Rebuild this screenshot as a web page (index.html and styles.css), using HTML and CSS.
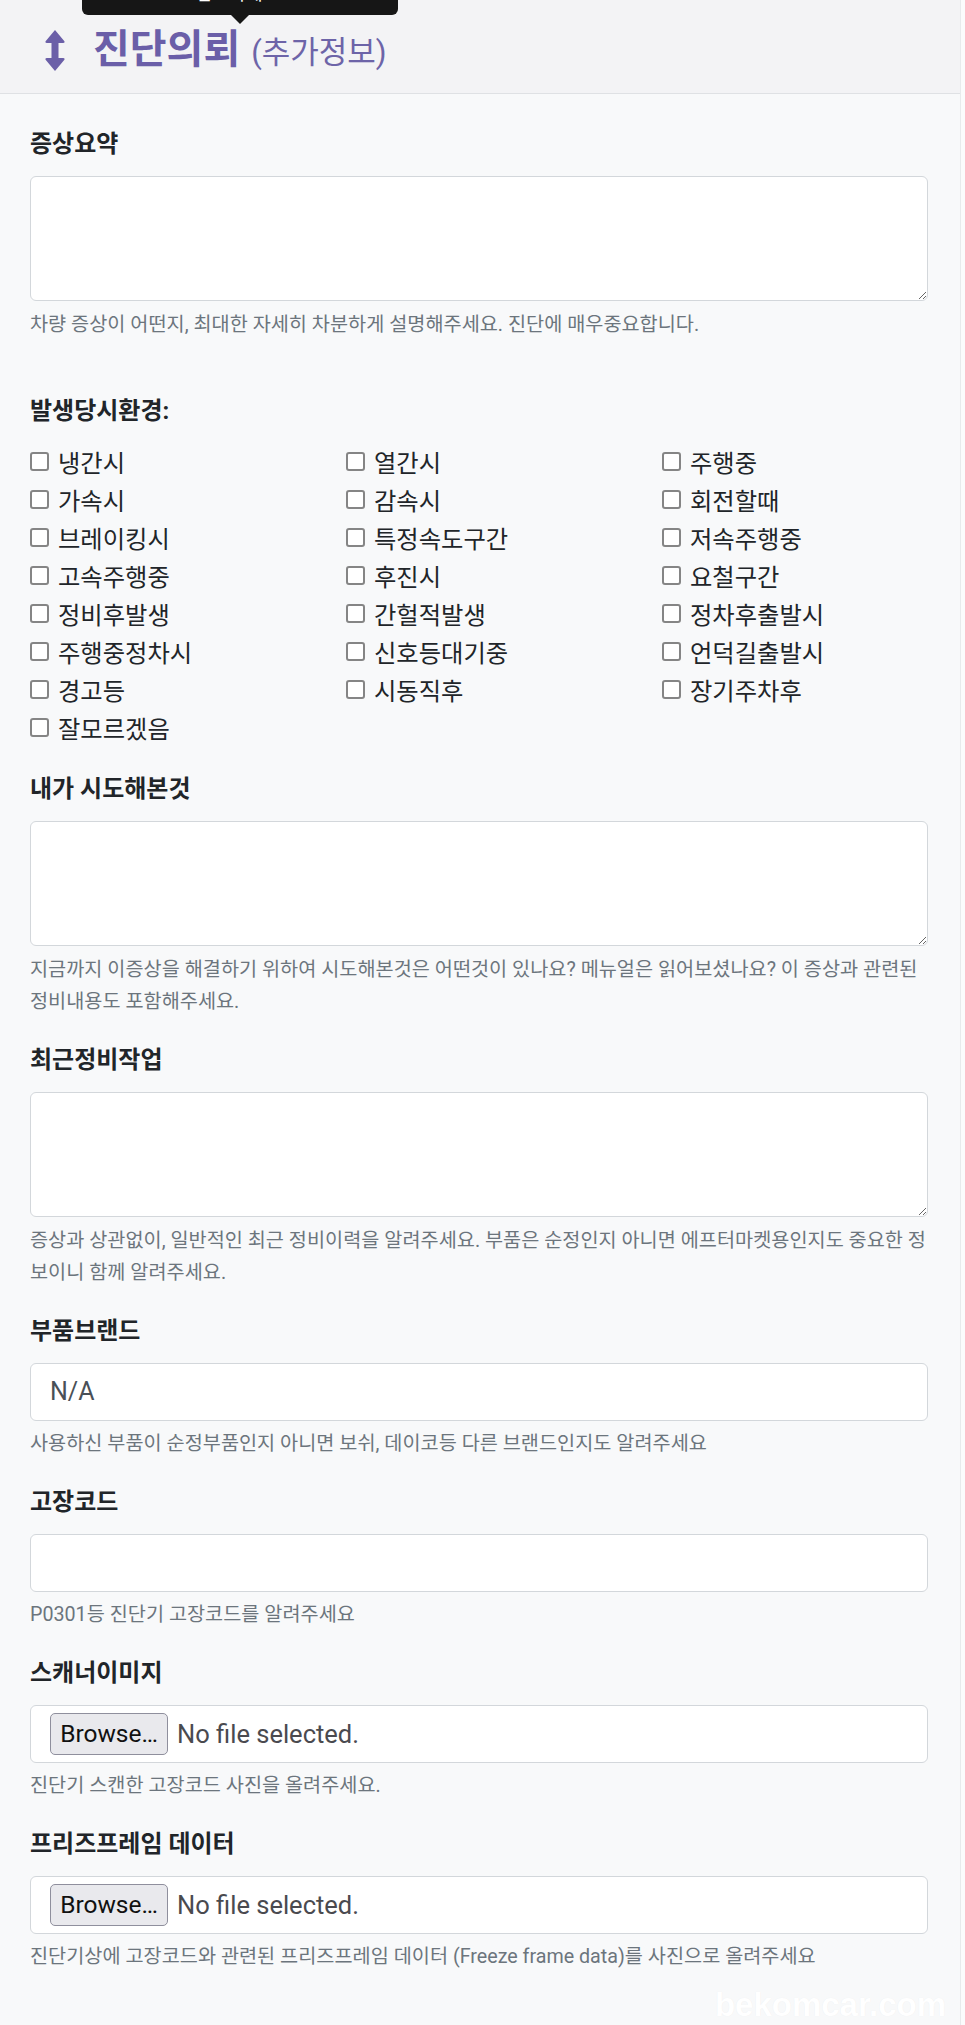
FILE: index.html
```html
<!DOCTYPE html>
<html lang="ko">
<head>
<meta charset="utf-8">
<title>진단의뢰</title>
<link rel="stylesheet" href="styles.css">
</head>
<body>
<div class="page">
  <div class="tooltip">참고하세요.</div>
  <div class="header">
    <svg class="hicon" width="20" height="41" viewBox="0 0 20 41"><path d="M10 0 L19.2 11 Q20.4 13 18 13 H13.5 V28 H18 Q20.4 28 19.2 30 L10 41 L0.8 30 Q-0.4 28 2 28 H6.5 V13 H2 Q-0.4 13 0.8 11 Z" fill="#6b5fa8"/></svg>
    <h1 class="title">진단의뢰 <small class="sub">(추가정보)</small></h1>
  </div>

  <form class="form">
    <div class="group">
      <label class="lbl">증상요약</label>
      <textarea class="ta"></textarea>
      <div class="help help-ta">차량 증상이 어떤지, 최대한 자세히 차분하게 설명해주세요. 진단에 매우중요합니다.</div>
    </div>

    <div class="group group-env">
      <label class="lbl">발생당시환경:</label>
      <div class="checks">
        <label class="chk"><input type="checkbox"><span>냉간시</span></label>
        <label class="chk"><input type="checkbox"><span>열간시</span></label>
        <label class="chk"><input type="checkbox"><span>주행중</span></label>
        <label class="chk"><input type="checkbox"><span>가속시</span></label>
        <label class="chk"><input type="checkbox"><span>감속시</span></label>
        <label class="chk"><input type="checkbox"><span>회전할때</span></label>
        <label class="chk"><input type="checkbox"><span>브레이킹시</span></label>
        <label class="chk"><input type="checkbox"><span>특정속도구간</span></label>
        <label class="chk"><input type="checkbox"><span>저속주행중</span></label>
        <label class="chk"><input type="checkbox"><span>고속주행중</span></label>
        <label class="chk"><input type="checkbox"><span>후진시</span></label>
        <label class="chk"><input type="checkbox"><span>요철구간</span></label>
        <label class="chk"><input type="checkbox"><span>정비후발생</span></label>
        <label class="chk"><input type="checkbox"><span>간헐적발생</span></label>
        <label class="chk"><input type="checkbox"><span>정차후출발시</span></label>
        <label class="chk"><input type="checkbox"><span>주행중정차시</span></label>
        <label class="chk"><input type="checkbox"><span>신호등대기중</span></label>
        <label class="chk"><input type="checkbox"><span>언덕길출발시</span></label>
        <label class="chk"><input type="checkbox"><span>경고등</span></label>
        <label class="chk"><input type="checkbox"><span>시동직후</span></label>
        <label class="chk"><input type="checkbox"><span>장기주차후</span></label>
        <label class="chk"><input type="checkbox"><span>잘모르겠음</span></label>
      </div>
    </div>

    <div class="group">
      <label class="lbl">내가 시도해본것</label>
      <textarea class="ta"></textarea>
      <div class="help help-ta">지금까지 이증상을 해결하기 위하여 시도해본것은 어떤것이 있나요? 메뉴얼은 읽어보셨나요? 이 증상과 관련된 정비내용도 포함해주세요.</div>
    </div>

    <div class="group">
      <label class="lbl">최근정비작업</label>
      <textarea class="ta"></textarea>
      <div class="help help-ta">증상과 상관없이, 일반적인 최근 정비이력을 알려주세요. 부품은 순정인지 아니면 에프터마켓용인지도 중요한 정보이니 함께 알려주세요.</div>
    </div>

    <div class="group">
      <label class="lbl">부품브랜드</label>
      <input class="inp" type="text" value="N/A">
      <div class="help">사용하신 부품이 순정부품인지 아니면 보쉬, 데이코등 다른 브랜드인지도 알려주세요</div>
    </div>

    <div class="group">
      <label class="lbl">고장코드</label>
      <input class="inp" type="text">
      <div class="help">P0301등 진단기 고장코드를 알려주세요</div>
    </div>

    <div class="group">
      <label class="lbl">스캐너이미지</label>
      <div class="file"><span class="browse">Browse…</span><span class="nofile">No file selected.</span></div>
      <div class="help">진단기 스캔한 고장코드 사진을 올려주세요.</div>
    </div>

    <div class="group">
      <label class="lbl">프리즈프레임 데이터</label>
      <div class="file"><span class="browse">Browse…</span><span class="nofile">No file selected.</span></div>
      <div class="help">진단기상에 고장코드와 관련된 프리즈프레임 데이터 (Freeze frame data)를 사진으로 올려주세요</div>
    </div>
  </form>

  <div class="watermark">bekomcar.com</div>
</div>
</body>
</html>
```

FILE: styles.css
```css
html, body {
  margin: 0;
  padding: 0;
}
body {
  background: #fbfbfc;
  font-family: Roboto, "Noto Sans CJK KR", "Noto Sans", sans-serif;
  color: #212529;
}
.page {
  position: relative;
  width: 960px;
  min-height: 2025px;
  background: #f8f9fa;
  border-right: 1px solid #e8eaec;
  overflow: hidden;
}
.tooltip {
  position: absolute;
  left: 82px;
  top: -30px;
  width: 316px;
  height: 45px;
  background: #161616;
  border-radius: 6px;
  color: #fff;
  font-size: 18px;
  line-height: 24px;
  text-align: center;
  padding-top: 12px;
  box-sizing: border-box;
  z-index: 5;
}
.tooltip::after {
  content: "";
  position: absolute;
  left: 149px;
  bottom: -9px;
  border-left: 9px solid transparent;
  border-right: 9px solid transparent;
  border-top: 9px solid #161616;
}
.header {
  height: 94px;
  box-sizing: border-box;
  background: #f3f3f5;
  border-bottom: 1px solid #dfe1e4;
  display: flex;
  align-items: center;
  padding: 9px 0 0 45px;
}
.hicon {
  flex: none;
  margin-top: -1px;
}
.title {
  margin: 0 0 0 28px;
  font-size: 40px;
  font-weight: 700;
  color: #6a5ea8;
  line-height: 50px;
  white-space: nowrap;
}
.sub {
  font-size: 31px;
  font-weight: 400;
  color: #6d64a8;
  margin-left: 1px;
}
.form {
  padding: 33.5px 32px 0 30px;
}
.group {
  margin-bottom: 26px;
}
.group-env {
  margin-top: 54px;
}
.lbl {
  display: block;
  font-size: 24px;
  font-weight: 700;
  line-height: 33px;
  margin-bottom: 15px;
  color: #212529;
}
.ta {
  display: block;
  width: 100%;
  height: 125px;
  box-sizing: border-box;
  margin: 0;
  border: 1px solid #d3d7db;
  border-radius: 6px;
  background: #fff;
  font-family: inherit;
  font-size: 22px;
}
.inp {
  display: block;
  width: 100%;
  height: 58px;
  box-sizing: border-box;
  margin: 0;
  padding: 0 19px;
  border: 1px solid #d3d7db;
  border-radius: 6px;
  background: #fff;
  font-family: inherit;
  font-size: 25px;
  color: #495057;
}
.help {
  font-size: 19.7px;
  line-height: 32px;
  color: #6c757d;
  margin-top: 7px;
}
.help-ta {
  margin-top: 8px;
}
.checks {
  display: grid;
  grid-template-columns: 316px 316px 1fr;
}
.chk {
  display: flex;
  align-items: center;
  height: 38px;
  font-size: 24.3px;
  color: #212529;
}
.chk input {
  appearance: none;
  -webkit-appearance: none;
  width: 19px;
  height: 19px;
  margin: 0 9px 0 0;
  border: 2px solid #858585;
  border-radius: 3px;
  background: #fff;
  box-sizing: border-box;
  flex: none;
}
.file {
  display: flex;
  align-items: center;
  height: 58px;
  box-sizing: border-box;
  border: 1px solid #d3d7db;
  border-radius: 6px;
  background: #fff;
  padding-left: 19px;
}
.browse {
  display: inline-flex;
  align-items: center;
  justify-content: center;
  width: 118px;
  height: 42px;
  box-sizing: border-box;
  background: #e9e9ed;
  border: 1px solid #8f8f9d;
  border-radius: 5px;
  font-size: 24.5px;
  color: #111;
  white-space: nowrap;
}
.nofile {
  margin-left: 9px;
  font-size: 25.5px;
  color: #4a4a4f;
}
.watermark {
  position: absolute;
  right: 14px;
  top: 1986px;
  font-family: "Liberation Sans", Arial, sans-serif;
  font-weight: 700;
  font-size: 33px;
  color: #ffffff;
  text-shadow: 0 0 1px rgba(0, 0, 0, 0.06);
}
```
